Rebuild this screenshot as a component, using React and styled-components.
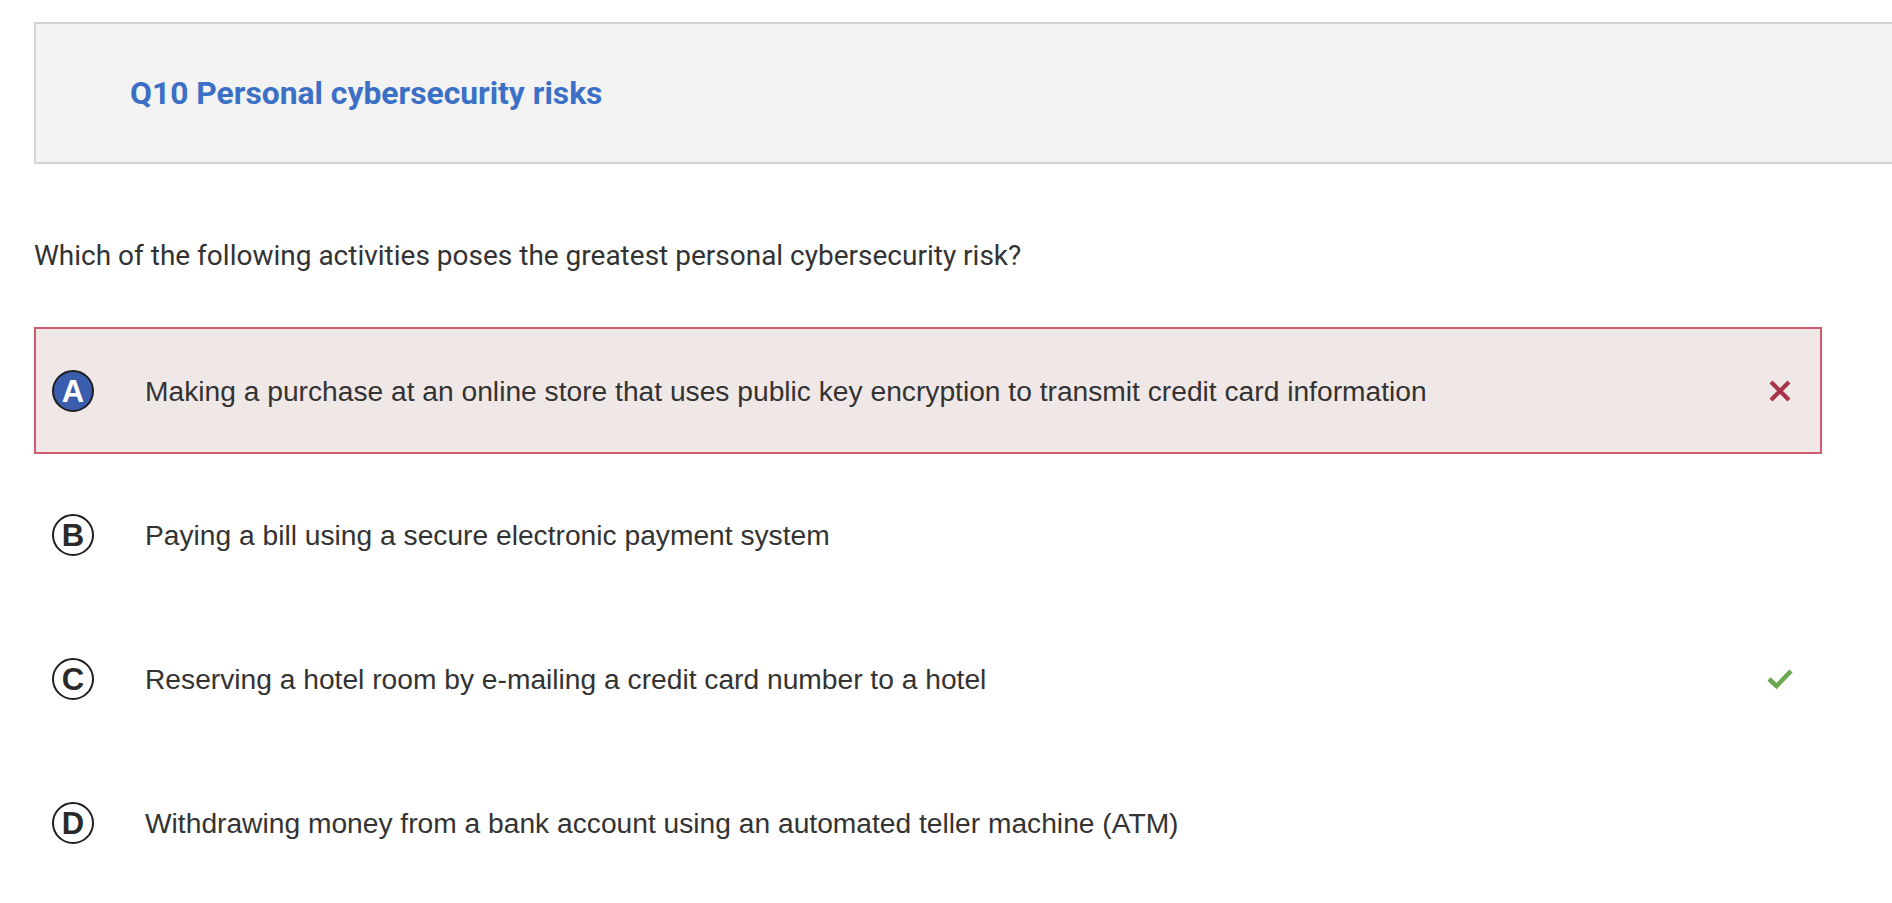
import React from "react";
import styled, { createGlobalStyle } from "styled-components";

const GlobalStyle = createGlobalStyle`
  html, body {
    margin: 0;
    padding: 0;
    background: #fff;
    overflow: hidden;
  }
  body {
    font-family: Roboto, "Liberation Sans", Arial, sans-serif;
    color: #333;
  }
`;

const options = [
  {
    letter: "A",
    text: "Making a purchase at an online store that uses public key encryption to transmit credit card information",
    selected: true,
    mark: "wrong"
  },
  {
    letter: "B",
    text: "Paying a bill using a secure electronic payment system"
  },
  {
    letter: "C",
    text: "Reserving a hotel room by e-mailing a credit card number to a hotel",
    mark: "right"
  },
  {
    letter: "D",
    text: "Withdrawing money from a bank account using an automated teller machine (ATM)"
  }
];

const CrossIcon = () => (
  <svg width="24" height="24" viewBox="0 0 24 24">
    <path
      d="M3 3 L21 21 M21 3 L3 21"
      stroke="#a8344b"
      strokeWidth="4.2"
      fill="none"
    />
  </svg>
);

const CheckIcon = () => (
  <svg width="26" height="22" viewBox="0 0 26 22">
    <path
      d="M2 11 L9.5 18 L24 3"
      stroke="#6aa84f"
      strokeWidth="4.5"
      strokeLinejoin="miter"
      fill="none"
    />
  </svg>
);

export default function App() {
  return (
    <>
      <GlobalStyle />
      <Page>
        <Header>
          <Title>Q10 Personal cybersecurity risks</Title>
        </Header>
        <Question>
          Which of the following activities poses the greatest personal
          cybersecurity risk?
        </Question>
        <OptionList>
          {options.map(o => (
            <Option key={o.letter} selected={o.selected}>
              <Badge selected={o.selected}>{o.letter}</Badge>
              <OptionText>{o.text}</OptionText>
              <Mark>
                {o.mark === "wrong" && <CrossIcon />}
                {o.mark === "right" && <CheckIcon />}
              </Mark>
            </Option>
          ))}
        </OptionList>
      </Page>
    </>
  );
}

const Page = styled.div`
  padding: 22px 0 0 34px;
`;

const Header = styled.div`
  height: 142px;
  box-sizing: border-box;
  margin-right: -40px;
  background: #f3f3f3;
  border: 2px solid #d3d3d7;
  display: flex;
  align-items: center;
  padding-left: 94px;
`;

const Title = styled.h2`
  margin: 0;
  font-size: 31.8px;
  font-weight: 700;
  color: #3b70c6;
`;

const Question = styled.p`
  margin: 74px 0 0 0;
  font-size: 28px;
  line-height: 36px;
  color: #333;
`;

const OptionList = styled.div`
  margin-top: 53px;
  display: flex;
  flex-direction: column;
  gap: 17px;
  width: 1788px;
`;

const Option = styled.div`
  height: 127px;
  box-sizing: border-box;
  display: flex;
  align-items: center;
  padding: 1px 27px 0 16px;
  border: 2px solid ${props => (props.selected ? "#d05b6c" : "transparent")};
  background: ${props => (props.selected ? "#f0e7e7" : "transparent")};
`;

const Badge = styled.span`
  width: 42px;
  height: 42px;
  box-sizing: border-box;
  flex: none;
  border-radius: 50%;
  border: 2px solid #1f1f1f;
  background: ${props => (props.selected ? "#3a5ead" : "#fff")};
  color: ${props => (props.selected ? "#fff" : "#2a2a2a")};
  display: flex;
  align-items: center;
  justify-content: center;
  font-family: "Liberation Sans", Arial, sans-serif;
  font-size: 31px;
  font-weight: 700;
  line-height: 1;
  padding-top: 1px;
`;

const OptionText = styled.span`
  flex: 1;
  margin-left: 51px;
  font-family: "Liberation Sans", Arial, sans-serif;
  font-size: 28.2px;
  color: #333;
`;

const Mark = styled.span`
  width: 26px;
  display: flex;
  justify-content: center;
  align-items: center;
`;
